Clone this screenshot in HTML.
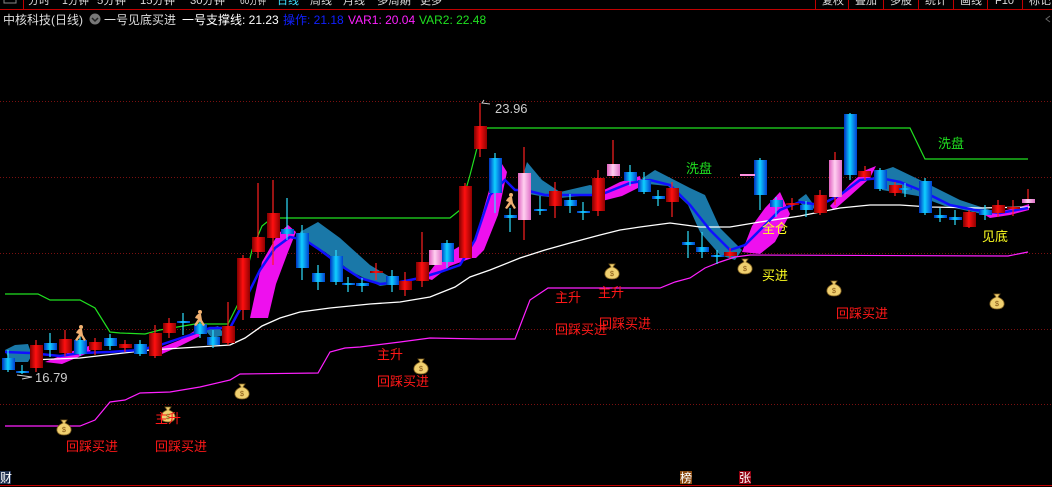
<!DOCTYPE html>
<html><head><meta charset="utf-8">
<style>
html,body{margin:0;padding:0;background:#000;width:1052px;height:487px;overflow:hidden}
svg{display:block}
text{font-family:"Liberation Sans","Noto Sans CJK SC",sans-serif}
</style></head><body>
<svg width="1052" height="487" viewBox="0 0 1052 487" xmlns="http://www.w3.org/2000/svg">
<defs>
<linearGradient id="r" x1="0" x2="1"><stop offset="0" stop-color="#800000"/><stop offset="0.45" stop-color="#ff1010"/><stop offset="1" stop-color="#900000"/></linearGradient>
<linearGradient id="b" x1="0" x2="1"><stop offset="0" stop-color="#0030c0"/><stop offset="0.45" stop-color="#10d0ff"/><stop offset="1" stop-color="#0040d0"/></linearGradient>
<linearGradient id="p" x1="0" x2="1"><stop offset="0" stop-color="#e060c0"/><stop offset="0.45" stop-color="#ffd0f0"/><stop offset="1" stop-color="#e070c8"/></linearGradient>
<g id="bag"><path d="M-3,-8 L3,-8 L1,-5 Q8,-2 7,3 Q6,7 0,7 Q-6,7 -7,3 Q-8,-2 -1,-5 Z" fill="#f0d070" stroke="#806020" stroke-width="0.8"/><text x="0" y="4" font-size="7" fill="#805010" text-anchor="middle">$</text></g>
<g id="run" fill="#f0b070"><circle cx="1" cy="-8" r="2"/><path d="M-1,-6 L2,-6 L3,0 L6,5 L4,6 L1,1 L-3,6 L-5,5 L-1,-1 L-4,-2 L-3,-4 Z"/></g>
</defs>

<!-- top bar -->
<line x1="0" y1="9.5" x2="1052" y2="9.5" stroke="#c00000" stroke-width="1"/>
<rect x="4" y="-4" width="12" height="7" fill="none" stroke="#888"/>
<line x1="23.5" y1="0" x2="23.5" y2="9" stroke="#c00000"/>
<g font-size="11" fill="#ddd">
<text x="28" y="4" textLength="22" lengthAdjust="spacingAndGlyphs">分时</text><text x="62" y="4" textLength="27" lengthAdjust="spacingAndGlyphs">1分钟</text><text x="97" y="4" textLength="29" lengthAdjust="spacingAndGlyphs">5分钟</text><text x="140" y="4" textLength="35" lengthAdjust="spacingAndGlyphs">15分钟</text><text x="190" y="4" textLength="35" lengthAdjust="spacingAndGlyphs">30分钟</text><text x="240" y="4" textLength="26" lengthAdjust="spacingAndGlyphs">60分钟</text>
<text x="277" y="4" fill="#40e0ff" textLength="22" lengthAdjust="spacingAndGlyphs">日线</text>
<text x="310" y="4" textLength="22" lengthAdjust="spacingAndGlyphs">周线</text><text x="343" y="4" textLength="22" lengthAdjust="spacingAndGlyphs">月线</text><text x="377" y="4" textLength="34" lengthAdjust="spacingAndGlyphs">多周期</text><text x="420" y="4" textLength="22" lengthAdjust="spacingAndGlyphs">更多</text>
<text x="822" y="4">复权</text><text x="855" y="4">叠加</text><text x="890" y="4">多股</text><text x="925" y="4">统计</text><text x="960" y="4">画线</text><text x="995" y="4">F10</text><text x="1029" y="4">标记</text>
</g>
<g stroke="#c00000"><line x1="815.5" y1="0" x2="815.5" y2="9"/><line x1="848.5" y1="0" x2="848.5" y2="9"/><line x1="883.5" y1="0" x2="883.5" y2="9"/><line x1="918.5" y1="0" x2="918.5" y2="9"/><line x1="953.5" y1="0" x2="953.5" y2="9"/><line x1="987.5" y1="0" x2="987.5" y2="9"/><line x1="1022.5" y1="0" x2="1022.5" y2="9"/></g>

<!-- legend -->
<g font-size="12">
<text x="3" y="24" fill="#ddd">中核科技(日线)</text>
<circle cx="95" cy="19" r="5.5" fill="#777"/><path d="M92,18 L95,21 L98,18" stroke="#222" stroke-width="1.5" fill="none"/>
<text x="104" y="24" fill="#ddd">一号见底买进</text>
<text x="182" y="24" fill="#fff">一号支撑线: 21.23</text>
<text x="283" y="24" fill="#1020ff">操作: 21.18</text>
<text x="348" y="24" fill="#ff20ff">VAR1: 20.04</text>
<text x="419" y="24" fill="#20e020">VAR2: 22.48</text>
</g>
<path d="M1050,16 L1046,19 L1050,22" stroke="#666" fill="none"/>

<!-- grid -->
<g stroke="#7a1010" stroke-dasharray="1,2"><line x1="0" y1="101.5" x2="1052" y2="101.5"/><line x1="0" y1="177.5" x2="1052" y2="177.5"/><line x1="0" y1="253.5" x2="1052" y2="253.5"/><line x1="0" y1="329.5" x2="1052" y2="329.5"/><line x1="0" y1="404.5" x2="1052" y2="404.5"/></g>

<!-- teal bands -->
<g fill="#1a78a8">
<polygon points="5,350 15,345 28,344 32,355 28,362 10,362"/>
<polygon points="300,232 318,222 340,238 370,265 400,283 380,286 352,272 325,252 302,240"/>
<polygon points="518,192 527,162 542,180 560,192 590,185 608,190 590,195 560,198 540,196"/>
<polygon points="640,180 655,170 690,188 705,195 720,228 742,250 735,260 720,255 700,232 688,205 668,186 648,184"/>
<polygon points="798,200 806,194 816,208 806,210"/>
<polygon points="878,172 893,167 920,180 960,200 990,210 982,214 945,206 918,196 882,190"/>
<polygon points="205,330 218,326 225,335 212,338"/>
</g>
<!-- magenta fills -->
<g fill="#ee10ee">
<polygon points="45,362 70,352 92,345 90,352 62,364"/>
<polygon points="160,348 180,340 196,330 200,336 180,346 162,354"/>
<polygon points="250,318 262,262 278,234 288,225 296,232 288,252 276,284 268,318"/>
<polygon points="425,278 440,258 460,246 482,240 472,258 450,266 432,280"/>
<polygon points="470,258 480,222 492,180 502,164 507,172 498,215 484,250 476,258"/>
<polygon points="596,194 620,182 640,176 642,186 622,196 598,202"/>
<polygon points="742,252 752,226 765,208 780,192 790,214 775,242 760,254"/>
<polygon points="830,206 850,184 866,170 876,166 870,178 850,196 834,210"/>
<polygon points="985,215 1002,211 1020,207 1029,204 1029,210 1010,215 990,218"/>
</g>

<!-- lines -->
<polyline fill="none" stroke="#fff" stroke-width="1.3" points="30,360 80,358 150,350 230,345 245,338 262,326 280,318 300,312 330,308 370,304 400,302 430,297 455,287 470,277 490,270 520,258 545,250 570,243 600,235 620,230 640,227 670,223 700,227 730,227 760,222 800,216 840,208 870,205 900,205 930,207 980,208 1030,207"/>
<polyline fill="none" stroke="#ff20ff" stroke-width="1.2" points="5,426 80,426 95,420 110,402 125,400 140,393 170,392 200,387 230,380 240,374 318,373 330,352 345,348 360,347 400,342 430,338 480,339 515,339 530,300 545,290 548,288 660,288 675,282 690,278 705,268 720,262 735,257 750,255 1008,256 1028,252"/>
<polyline fill="none" stroke="#20e020" stroke-width="1.2" points="5,294 38,294 50,300 80,300 95,308 110,332 120,333 145,334 160,330 195,324 228,324 240,300 252,250 262,226 272,218 450,218 460,210 470,175 477,148 487,128 910,128 925,159 1028,159"/>
<polyline fill="none" stroke="#1010ff" stroke-width="2.5" points="5,352 30,353 60,356 80,353 110,352 140,350 160,345 190,335 210,328 230,328 245,300 260,270 275,248 290,237 305,240 320,250 340,265 360,278 380,284 400,282 420,278 440,272 460,265 475,240 490,195 505,180 515,190 525,190 545,195 570,195 600,195 630,183 650,180 670,185 690,205 710,230 730,250 745,245 760,230 780,210 800,202 820,205 840,195 860,180 880,178 900,182 920,190 950,205 975,210 1000,213 1028,208"/>

<!-- candles: wicks -->
<g stroke-width="1.2">
<g stroke="#ff2020">
<line x1="36" y1="340" x2="36" y2="372"/><line x1="65" y1="330" x2="65" y2="356"/><line x1="95" y1="338" x2="95" y2="355"/><line x1="125" y1="340" x2="125" y2="352"/><line x1="155" y1="325" x2="155" y2="358"/><line x1="169" y1="318" x2="169" y2="338"/><line x1="228" y1="302" x2="228" y2="345"/><line x1="243" y1="255" x2="243" y2="320"/><line x1="258" y1="183" x2="258" y2="258"/><line x1="273" y1="180" x2="273" y2="265"/><line x1="376" y1="263" x2="376" y2="280"/><line x1="405" y1="272" x2="405" y2="296"/><line x1="422" y1="232" x2="422" y2="287"/><line x1="465" y1="183" x2="465" y2="258"/><line x1="480" y1="103" x2="480" y2="157"/><line x1="555" y1="182" x2="555" y2="218"/><line x1="598" y1="170" x2="598" y2="216"/><line x1="672" y1="182" x2="672" y2="217"/><line x1="730" y1="248" x2="730" y2="258"/><line x1="792" y1="198" x2="792" y2="210"/><line x1="820" y1="190" x2="820" y2="215"/><line x1="865" y1="166" x2="865" y2="180"/><line x1="895" y1="182" x2="895" y2="196"/><line x1="969" y1="210" x2="969" y2="228"/><line x1="998" y1="200" x2="998" y2="217"/><line x1="1013" y1="200" x2="1013" y2="216"/><line x1="1028" y1="189" x2="1028" y2="203"/><line x1="524" y1="147" x2="524" y2="240"/><line x1="613" y1="140" x2="613" y2="178"/><line x1="835" y1="152" x2="835" y2="205"/>
</g>
<g stroke="#30e0ff">
<line x1="8" y1="350" x2="8" y2="372"/><line x1="22" y1="365" x2="22" y2="374"/><line x1="50" y1="333" x2="50" y2="357"/><line x1="80" y1="335" x2="80" y2="356"/><line x1="110" y1="334" x2="110" y2="350"/><line x1="140" y1="340" x2="140" y2="356"/><line x1="183" y1="313" x2="183" y2="335"/><line x1="200" y1="320" x2="200" y2="338"/><line x1="213" y1="330" x2="213" y2="348"/><line x1="287" y1="198" x2="287" y2="240"/><line x1="302" y1="225" x2="302" y2="280"/><line x1="318" y1="265" x2="318" y2="290"/><line x1="336" y1="250" x2="336" y2="285"/><line x1="348" y1="277" x2="348" y2="292"/><line x1="362" y1="278" x2="362" y2="292"/><line x1="392" y1="270" x2="392" y2="292"/><line x1="447" y1="240" x2="447" y2="268"/><line x1="495" y1="153" x2="495" y2="213"/><line x1="510" y1="208" x2="510" y2="232"/><line x1="540" y1="196" x2="540" y2="215"/><line x1="570" y1="194" x2="570" y2="213"/><line x1="583" y1="202" x2="583" y2="220"/><line x1="630" y1="165" x2="630" y2="186"/><line x1="644" y1="172" x2="644" y2="194"/><line x1="658" y1="190" x2="658" y2="206"/><line x1="688" y1="231" x2="688" y2="258"/><line x1="702" y1="232" x2="702" y2="258"/><line x1="717" y1="250" x2="717" y2="264"/><line x1="760" y1="158" x2="760" y2="210"/><line x1="776" y1="197" x2="776" y2="217"/><line x1="806" y1="201" x2="806" y2="217"/><line x1="850" y1="113" x2="850" y2="180"/><line x1="880" y1="168" x2="880" y2="191"/><line x1="905" y1="183" x2="905" y2="197"/><line x1="925" y1="178" x2="925" y2="215"/><line x1="940" y1="208" x2="940" y2="222"/><line x1="955" y1="210" x2="955" y2="225"/><line x1="985" y1="205" x2="985" y2="220"/>
</g>
</g>
<!-- red bodies -->
<g fill="url(#r)">
<rect x="30" y="345" width="13" height="23"/><rect x="59" y="339" width="13" height="14"/><rect x="89" y="342" width="13" height="8"/><rect x="119" y="344" width="13" height="4"/><rect x="149" y="333" width="13" height="23"/><rect x="163" y="323" width="13" height="10"/><rect x="222" y="326" width="13" height="17"/><rect x="237" y="258" width="13" height="52"/><rect x="252" y="237" width="13" height="15"/><rect x="267" y="213" width="13" height="25"/><rect x="370" y="271" width="13" height="2"/><rect x="399" y="281" width="13" height="9"/><rect x="416" y="262" width="13" height="19"/><rect x="459" y="186" width="13" height="72"/><rect x="474" y="126" width="13" height="23"/><rect x="549" y="191" width="13" height="15"/><rect x="592" y="178" width="13" height="33"/><rect x="666" y="188" width="13" height="14"/><rect x="724" y="252" width="13" height="4"/><rect x="786" y="203" width="13" height="2"/><rect x="814" y="195" width="13" height="18"/><rect x="858" y="171" width="13" height="6"/><rect x="889" y="185" width="13" height="8"/><rect x="963" y="212" width="13" height="15"/><rect x="992" y="205" width="13" height="8"/><rect x="1007" y="207" width="13" height="2"/>
</g>
<!-- blue bodies -->
<g fill="url(#b)">
<rect x="2" y="358" width="13" height="12"/><rect x="16" y="371" width="13" height="2"/><rect x="44" y="343" width="13" height="7"/><rect x="74" y="340" width="13" height="14"/><rect x="104" y="338" width="13" height="8"/><rect x="134" y="344" width="13" height="10"/><rect x="177" y="321" width="13" height="2"/><rect x="194" y="324" width="13" height="10"/><rect x="207" y="337" width="13" height="8"/><rect x="281" y="229" width="13" height="5"/><rect x="296" y="233" width="13" height="35"/><rect x="312" y="273" width="13" height="9"/><rect x="330" y="256" width="13" height="26"/><rect x="342" y="283" width="13" height="2"/><rect x="356" y="283" width="13" height="3"/><rect x="386" y="276" width="13" height="9"/><rect x="441" y="243" width="13" height="19"/><rect x="489" y="158" width="13" height="35"/><rect x="504" y="215" width="13" height="3"/><rect x="534" y="209" width="13" height="2"/><rect x="564" y="200" width="13" height="6"/><rect x="577" y="211" width="13" height="2"/><rect x="624" y="172" width="13" height="9"/><rect x="638" y="180" width="13" height="12"/><rect x="652" y="196" width="13" height="3"/><rect x="682" y="242" width="13" height="3"/><rect x="696" y="247" width="13" height="5"/><rect x="711" y="255" width="13" height="2"/><rect x="754" y="160" width="13" height="35"/><rect x="770" y="200" width="13" height="7"/><rect x="800" y="205" width="13" height="5"/><rect x="844" y="114" width="13" height="61"/><rect x="874" y="170" width="13" height="19"/><rect x="899" y="188" width="13" height="2"/><rect x="919" y="181" width="13" height="32"/><rect x="934" y="215" width="13" height="3"/><rect x="949" y="217" width="13" height="3"/><rect x="979" y="210" width="13" height="5"/>
</g>
<!-- pink bodies -->
<g fill="url(#p)">
<rect x="429" y="250" width="13" height="15"/><rect x="518" y="173" width="13" height="47"/><rect x="607" y="164" width="13" height="12"/><rect x="829" y="160" width="13" height="37"/><rect x="1022" y="199" width="13" height="4"/>
</g>
<line x1="740" y1="175" x2="755" y2="175" stroke="#ff90e0" stroke-width="2"/>

<!-- price labels -->
<polyline points="490,104 482,103 484,100" fill="none" stroke="#ccc"/>
<text x="495" y="113" font-size="13" fill="#ccc">23.96</text>
<polyline points="17,375 32,377 22,379" fill="none" stroke="#ccc"/>
<text x="35" y="382" font-size="13" fill="#ccc">16.79</text>

<!-- icons -->
<use href="#run" x="80" y="335"/><use href="#run" x="199" y="320"/><use href="#run" x="510" y="203"/>
<use href="#bag" x="64" y="428"/><use href="#bag" x="168" y="415"/><use href="#bag" x="242" y="392"/><use href="#bag" x="421" y="367"/><use href="#bag" x="612" y="272"/><use href="#bag" x="745" y="267"/><use href="#bag" x="834" y="289"/><use href="#bag" x="997" y="302"/>

<!-- signal texts -->
<g font-size="13">
<g fill="#ff1818">
<text x="66" y="451">回踩买进</text><text x="155" y="451">回踩买进</text><text x="377" y="386">回踩买进</text><text x="555" y="334">回踩买进</text><text x="599" y="328">回踩买进</text><text x="836" y="318">回踩买进</text>
<text x="155" y="423">主升</text><text x="377" y="359">主升</text><text x="555" y="302">主升</text><text x="598" y="297">主升</text>
</g>
<text x="686" y="173" fill="#20e020">洗盘</text><text x="938" y="148" fill="#20e020">洗盘</text>
<text x="762" y="233" fill="#ffff20">全仓</text><text x="762" y="280" fill="#ffff20">买进</text><text x="982" y="241" fill="#ffff20">见底</text>
</g>

<!-- bottom -->
<line x1="0" y1="485.5" x2="1052" y2="485.5" stroke="#c00000"/>
<rect x="0" y="471" width="11" height="13" fill="#203050"/><text x="0" y="482" font-size="12" fill="#fff">财</text>
<rect x="680" y="471" width="12" height="13" fill="#8a4a10"/><text x="680" y="482" font-size="12" fill="#fff">榜</text>
<rect x="739" y="471" width="12" height="13" fill="#900010"/><text x="739" y="482" font-size="12" fill="#fff">张</text>
</svg>
</body></html>
